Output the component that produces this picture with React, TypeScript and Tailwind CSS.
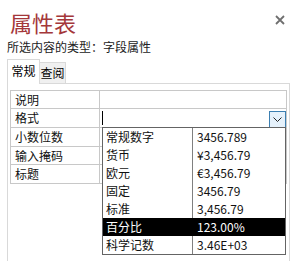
const FONT = "font-['Noto_Sans_CJK_SC','Noto_Sans',sans-serif]"

const FIELDS: { label: string; h: string }[] = [
  { label: '说明', h: 'h-[18px]' },
  { label: '格式', h: 'h-[19px]' },
  { label: '小数位数', h: 'h-[19px]' },
  { label: '输入掩码', h: 'h-[18px]' },
  { label: '标题', h: 'h-[19px]' }
]

const FORMATS: { name: string; sample: string }[] = [
  { name: '常规数字', sample: '3456.789' },
  { name: '货币', sample: '¥3,456.79' },
  { name: '欧元', sample: '€3,456.79' },
  { name: '固定', sample: '3456.79' },
  { name: '标准', sample: '3,456.79' },
  { name: '百分比', sample: '123.00%' },
  { name: '科学记数', sample: '3.46E+03' }
]

function CloseIcon(): JSX.Element {
  return (
    <svg width="10" height="10" viewBox="0 0 10 10" className="block">
      <path d="M1 1 L9 9 M9 1 L1 9" stroke="#6f6f6f" strokeWidth="1.8" fill="none" />
    </svg>
  )
}

function Chevron(): JSX.Element {
  return (
    <svg width="9" height="5" viewBox="0 0 9 5" className="block">
      <path d="M0.5 0.5 L4.5 4.5 L8.5 0.5" stroke="#222" strokeWidth="1" fill="none" />
    </svg>
  )
}

export default function App(): JSX.Element {
  const selected = '百分比'

  return (
    <div className={`relative h-[261px] w-[293px] overflow-hidden bg-white text-black ${FONT}`}>
      {/* Header */}
      <div className="flex items-start justify-between pt-[8px] pl-[10px] pr-[8px]">
        <h1 className="text-[22px] leading-[28px] text-[#a4373a]">属性表</h1>
        <button type="button" className="mt-[7px]"><CloseIcon /></button>
      </div>
      <p className="mt-[2px] pl-[7px] text-[12px] leading-[17px] text-[#222]">所选内容的类型：字段属性</p>

      {/* Tabs */}
      <div className="mt-[4px] flex items-end pl-[7px]">
        <div className="relative z-10 -mb-px flex h-[25px] w-[33px] items-start justify-center border border-b-0 border-[#d9d9d9] bg-white pt-[3px] text-[12px] leading-[16px]">
          常规
        </div>
        <div className="flex h-[21px] w-[26px] items-start justify-center border border-l-0 border-b-0 border-[#d9d9d9] bg-[#f0f0f0] pt-[2px] text-[12px] leading-[16px]">
          查阅
        </div>
      </div>

      {/* Panel */}
      <div className="ml-[7px] h-[200px] w-[283px] border border-b-0 border-[#d9d9d9] px-[2px] pt-[6px]">
        <div className="border border-[#c8c8c8] border-b-0 text-[12px] text-[#111]">
          {FIELDS.map((f) => (
            <div key={f.label} className={`flex ${f.h} border-b border-[#c8c8c8]`}>
              <div className="flex w-[89px] items-center border-r border-[#c8c8c8] pl-[4px] leading-none">{f.label}</div>
              <div className="relative flex-1">
                {f.label === '格式' && (
                  <>
                    <span className="absolute left-[2px] top-[2px] h-[14px] w-px bg-black" />
                    <button type="button" className="absolute bottom-[-1px] right-0 flex h-[17px] w-[17px] items-center justify-center border border-[#3c7fb1] bg-[#e5f1fb]">
                      <Chevron />
                    </button>
                  </>
                )}
              </div>
            </div>
          ))}
        </div>
      </div>

      {/* Format dropdown */}
      <div className="absolute left-[102px] top-[127px] w-[184px] border border-[#646464] bg-white text-[12px]">
        {FORMATS.map((f) => {
          const active = f.name === selected
          return (
            <div key={f.name} className={`flex h-[18px] items-center leading-none ${active ? 'bg-black text-white' : 'text-[#111]'}`}>
              <div className={`flex h-full w-[90px] items-center pl-[3px] ${active ? '' : 'border-r border-[#808080]'}`}>{f.name}</div>
              <div className="pl-[4px]">{f.sample}</div>
            </div>
          )
        })}
      </div>
    </div>
  )
}
